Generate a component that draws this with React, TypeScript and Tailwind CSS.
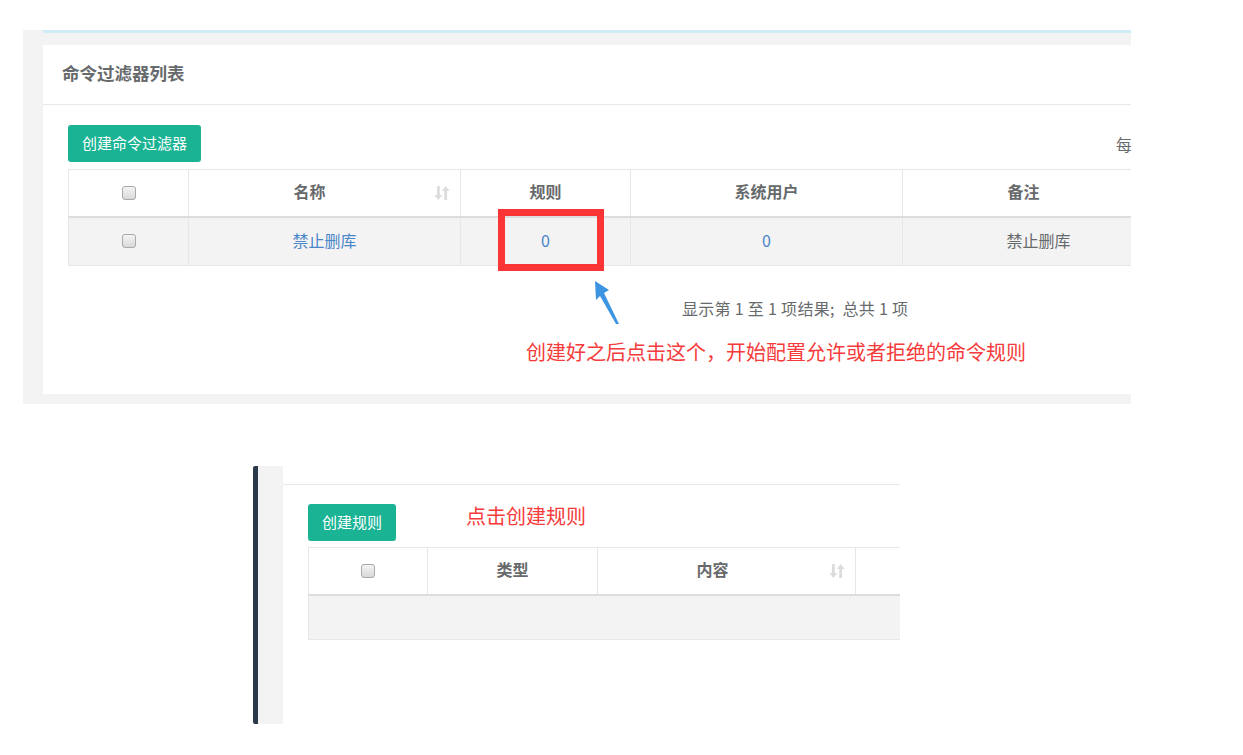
import React from "react";

/* ---------- small pieces ---------- */
function Check() {
  return (
    <span className="inline-block w-[14px] h-[14px] rounded-[3px] border border-[#a9a9a9] bg-gradient-to-b from-[#f4f4f4] to-[#d9d9d9]" />
  );
}

function SortIcon() {
  return (
    <svg width="16" height="16" viewBox="0 0 16 16" className="shrink-0">
      {/* down arrow */}
      <rect x="3" y="1" width="2.8" height="10" fill="#dcdcdc" />
      <polygon points="0.5,10 8.3,10 4.4,15" fill="#dcdcdc" />
      {/* up arrow */}
      <rect x="10.3" y="5" width="2.8" height="10" fill="#dcdcdc" />
      <polygon points="7.8,6 15.6,6 11.7,1" fill="#dcdcdc" />
    </svg>
  );
}

const font = { fontFamily: '"Microsoft YaHei", "Noto Sans CJK SC", "Open Sans", sans-serif' };

export default function App() {
  return (
    <div className="w-[1243px] h-[755px] bg-white overflow-hidden relative text-[#676a6c]" style={font}>
      {/* ---------- TOP PANEL ---------- */}
      <div className="pt-[30px] pl-[23px]">
        <div className="w-[1108px] bg-[#f3f3f4] rounded-bl-[3px] overflow-hidden pl-[20px] pb-[10px]">
          <div className="h-[3px] bg-[#cfedf6]" />
          <div className="h-[12px]" />
          <div className="bg-white relative">
            {/* header */}
            <div className="h-[60px] border-b border-[#e7eaec] flex items-center pl-[19px] pb-[2px]">
              <h2 className="text-[17.5px] font-bold">命令过滤器列表</h2>
            </div>

            {/* content */}
            <div className="w-[1300px] pl-[25px] pt-[20px]">
              <div className="flex items-start">
                <button className="h-[37px] w-[133px] rounded-[3px] bg-[#1ab394] text-white text-[15px]">
                  创建命令过滤器
                </button>
                <span className="ml-[915px] mt-[7px] text-[16px] whitespace-nowrap">每</span>
              </div>

              <table className="mt-[7px] border-collapse text-[16px] table-fixed w-[1106px]">
                <thead>
                  <tr className="h-[47px]">
                    <th className="w-[120px] border border-[#e7e7e7] border-b-2 border-b-[#dddddd] font-normal">
                      <div className="flex justify-center"><Check /></div>
                    </th>
                    <th className="w-[272px] border border-[#e7e7e7] border-b-2 border-b-[#dddddd] font-bold relative pr-[30px] pb-[3px]">
                      名称
                      <span className="absolute right-[10px] top-[15px]"><SortIcon /></span>
                    </th>
                    <th className="w-[170px] border border-[#e7e7e7] border-b-2 border-b-[#dddddd] font-bold pb-[3px]">规则</th>
                    <th className="w-[272px] border border-[#e7e7e7] border-b-2 border-b-[#dddddd] font-bold pb-[3px]">系统用户</th>
                    <th className="w-[272px] border border-[#e7e7e7] border-b-2 border-b-[#dddddd] font-bold pr-[30px] pb-[3px]">备注</th>
                  </tr>
                </thead>
                <tbody>
                  <tr className="h-[49px] bg-[#f3f3f3]">
                    <td className="border border-[#e7e7e7]">
                      <div className="flex justify-center"><Check /></div>
                    </td>
                    <td className="border border-[#e7e7e7] text-center text-[#4a86c8] pb-[2px]">禁止删库</td>
                    <td className="border border-[#e7e7e7] text-center text-[#4a86c8] pb-[2px]">0</td>
                    <td className="border border-[#e7e7e7] text-center text-[#4a86c8] pb-[2px]">0</td>
                    <td className="border border-[#e7e7e7] text-center pb-[2px]">禁止删库</td>
                  </tr>
                </tbody>
              </table>

              <div className="pl-[614px] pt-[30px] text-[16px] h-[52px] whitespace-pre tracking-[0.3px]">显示第 1 至 1 项结果;  总共 1 项</div>
              <div className="pl-[458px] pt-[19px] text-[20px] text-[#f53b3b] h-[76px]">
                创建好之后点击这个，开始配置允许或者拒绝的命令规则
              </div>
            </div>
          </div>
        </div>
      </div>

      {/* annotation: red box + arrow over the rule count */}
      <div className="absolute left-[498px] top-[209px] w-[106px] h-[62px] border-[7px] border-[#fb3535]" />
      <svg className="absolute left-[590px] top-[276px]" width="36" height="54" viewBox="590 276 36 54">
        <polygon points="595,281 609,290 604,293 619,324 616,324 600,296 596,300" fill="#3d94e0" />
      </svg>

      {/* ---------- BOTTOM PANEL ---------- */}
      <div className="mt-[62px] ml-[253px] flex h-[258px] w-[647px]">
        <div className="w-[5px] bg-[#2a3a4a] rounded-l-[2px]" />
        <div className="w-[25px] bg-[#f3f3f4]" />
        <div className="flex-1 overflow-hidden bg-white">
          <div className="h-[19px] border-b border-[#e7eaec]" />
          <div className="w-[800px] pl-[25px] pt-[19px]">
            <div className="flex items-start">
              <button className="h-[37px] w-[88px] rounded-[3px] bg-[#1ab394] text-white text-[15px]">
                创建规则
              </button>
              <span className="ml-[70px] mt-[-3px] text-[20px] text-[#f53b3b]">点击创建规则</span>
            </div>

            <table className="mt-[6px] border-collapse text-[16px] table-fixed w-[687px]">
              <thead>
                <tr className="h-[47px]">
                  <th className="w-[119px] border border-[#e7e7e7] border-b-2 border-b-[#dddddd] font-normal">
                    <div className="flex justify-center"><Check /></div>
                  </th>
                  <th className="w-[170px] border border-[#e7e7e7] border-b-2 border-b-[#dddddd] font-bold pb-[3px]">类型</th>
                  <th className="w-[258px] border border-[#e7e7e7] border-b-2 border-b-[#dddddd] font-bold relative pr-[28px] pb-[3px]">
                    内容
                    <span className="absolute right-[10px] top-[15px]"><SortIcon /></span>
                  </th>
                  <th className="w-[140px] border border-[#e7e7e7] border-b-2 border-b-[#dddddd] font-bold"></th>
                </tr>
              </thead>
              <tbody>
                <tr className="h-[45px] bg-[#f3f3f3]">
                  <td colSpan={4} className="border border-[#e7e7e7]"></td>
                </tr>
              </tbody>
            </table>
          </div>
        </div>
      </div>
    </div>
  );
}
